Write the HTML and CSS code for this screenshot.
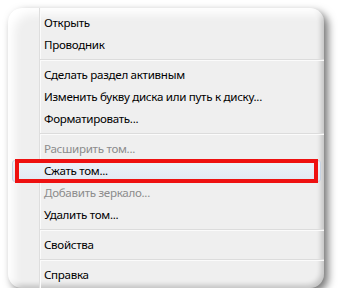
FILE: index.html
```html
<!DOCTYPE html>
<html lang="ru">
<head>
  <meta charset="UTF-8" />
  <title>Контекстное меню тома</title>
  <link rel="stylesheet" href="styles.css">
</head>
<body>
  <div class="shot">
    <ul class="menu">
      <li class="item">Открыть</li>
      <li class="item">Проводник</li>
      <li class="sep"><span></span></li>
      <li class="item">Сделать раздел активным</li>
      <li class="item">Изменить букву диска или путь к диску...</li>
      <li class="item">Форматировать...</li>
      <li class="sep"><span></span></li>
      <li class="item disabled">Расширить том...</li>
      <li class="item hover marked">Сжать том...</li>
      <li class="item disabled">Добавить зеркало...</li>
      <li class="item">Удалить том...</li>
      <li class="sep"><span></span></li>
      <li class="item">Свойства</li>
      <li class="sep"><span></span></li>
      <li class="item">Справка</li>
    </ul>
  </div>
</body>
</html>
```

FILE: styles.css
```css
body {
  margin: 0;
  background-color: #ffffff;
  font-family: "Noto Sans", "Open Sans", sans-serif;
  font-size: 11.6px;
  letter-spacing: -0.3px;
  color: #000000;
}

.shot {
  margin: 8px 0 0 8px;
  width: 316px;
  height: 280px;
  border-radius: 14px;
  background-color: #efefef;
  overflow: hidden;
  box-shadow:
    inset 10px 10px 10px -4px #ffffff,
    inset -3px -3px 5px rgba(0,0,0,0.18),
    4px 4px 8px rgba(0,0,0,0.55);
}

.menu {
  list-style: none;
  margin: 0;
  padding: 4px 0 0 0;
  height: 100%;
  background: linear-gradient(to right, transparent 31px, #dedede 31px, #dedede 32px, #fbfbfb 32px, #fbfbfb 33px, transparent 33px);
}

.item {
  position: relative;
  height: 22px;
  line-height: 22px;
  padding-left: 36px;
  white-space: nowrap;
}

.disabled {
  color: #8c8c8c;
}

.hover {
  margin: 0 3px 0 4px;
  padding-left: 31px;
  border: 1px solid #c6d2e2;
  border-radius: 3px;
  height: 20px;
  line-height: 20px;
  background: linear-gradient(#eef2f8, #e1e8f3);
}

.marked::after {
  content: "";
  position: absolute;
  left: 2px;
  right: 2px;
  top: -2px;
  bottom: -2px;
  border: 4px solid #ee1111;
}

.sep {
  padding: 3px 0 3px 32px;
}

.sep span {
  display: block;
  border-top: 1px solid #dcdcdc;
  border-bottom: 1px solid #fbfbfb;
}
```
